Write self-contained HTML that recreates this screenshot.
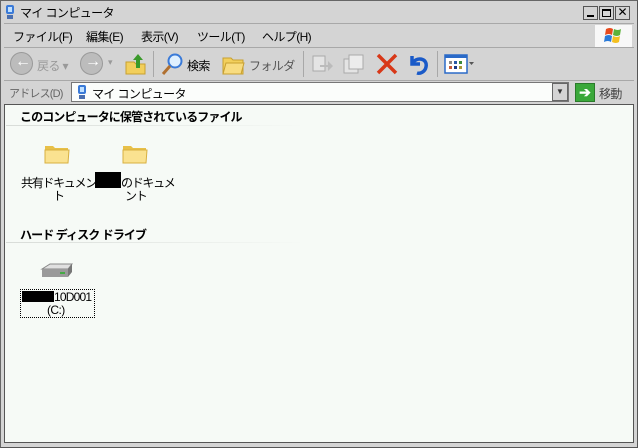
<!DOCTYPE html>
<html><head><meta charset="utf-8"><style>
*{margin:0;padding:0;box-sizing:border-box}
body{width:638px;height:448px;background:#d4d4d4;font-family:"Liberation Sans","Noto Sans CJK JP",sans-serif;font-size:12px;color:#000;position:relative;overflow:hidden;letter-spacing:-0.6px}
.a{position:absolute}
.win{left:0;top:0;width:638px;height:448px;border:1px solid #666;border-right-color:#555;border-bottom-color:#555}
.t{white-space:nowrap}
.hline{height:1px;background:#a8a8a8}
.btn{width:15px;height:14px;border:1px solid #555;background:#d4d4d4;letter-spacing:0}
</style></head><body>
<div class="a win"></div>
<svg class="a" style="left:4px;top:4px" width="12" height="16"><rect x="2" y="1" width="8" height="9" rx="2" fill="#3a7ad8"/><rect x="4" y="3" width="4" height="5" fill="#bfe0ff"/><rect x="3" y="11" width="6" height="4" fill="#4a6fb0"/></svg>
<div class="a t" style="left:20px;top:4px">マイ コンピュータ</div>
<div class="a btn" style="left:583px;top:6px"><div class="a" style="left:3px;top:8px;width:7px;height:2px;background:#000"></div></div>
<div class="a btn" style="left:599px;top:6px"><div class="a" style="left:2px;top:2px;width:9px;height:8px;border:1px solid #000;border-top-width:2px"></div></div>
<div class="a btn" style="left:615px;top:6px;font-size:12px;line-height:11px;text-align:center">✕</div>
<div class="a hline" style="left:4px;top:23px;width:630px"></div>
<div class="a t" style="left:13px;top:28px">ファイル(F)</div>
<div class="a t" style="left:86px;top:28px">編集(E)</div>
<div class="a t" style="left:141px;top:28px">表示(V)</div>
<div class="a t" style="left:197px;top:28px">ツール(T)</div>
<div class="a t" style="left:262px;top:28px">ヘルプ(H)</div>
<div class="a" style="left:595px;top:25px;width:37px;height:22px;background:#f8f8f8"></div>
<svg class="a" style="left:603px;top:27px" width="20" height="18"><path d="M3 2 q4-2 7 0 l-1 6 q-3-2-7 0z" fill="#e84a1c"/><path d="M11 2 q4 2 7 0 l-1 6 q-3 2-7 0z" fill="#5cb23a"/><path d="M2 9 q4-2 7 0 l-1 6 q-3-2-7 0z" fill="#2a7ad8"/><path d="M10 9 q4 2 7 0 l-1 6 q-3 2-7 0z" fill="#f4c020"/></svg>
<div class="a hline" style="left:4px;top:47px;width:630px"></div>
<div class="a" style="left:10px;top:52px;width:23px;height:23px;border-radius:50%;background:#bcbcbc;border:1px solid #999"></div>
<div class="a t" style="left:15px;top:53px;color:#fff;font-size:16px;font-weight:bold">←</div>
<div class="a t" style="left:37px;top:57px;color:#999">戻る ▾</div>
<div class="a" style="left:80px;top:52px;width:23px;height:23px;border-radius:50%;background:#bcbcbc;border:1px solid #999"></div>
<div class="a t" style="left:85px;top:53px;color:#fff;font-size:16px;font-weight:bold">→</div>
<div class="a t" style="left:108px;top:57px;color:#999;font-size:9px">▾</div>
<svg class="a" style="left:124px;top:52px" width="24" height="24"><path d="M2 10h8l2 2h9v10H2z" fill="#f2cf5c" stroke="#c8a030"/><path d="M12 16v-8h-3l5-6 5 6h-3v8z" fill="#3a9a2a"/></svg>
<div class="a" style="left:153px;top:51px;width:1px;height:26px;background:#a8a8a8"></div>
<svg class="a" style="left:160px;top:52px" width="24" height="24"><circle cx="15" cy="9" r="6.5" fill="#dff0ff" stroke="#3a7ad8" stroke-width="2"/><path d="M10 14l-7 8" stroke="#b07030" stroke-width="3"/></svg>
<div class="a t" style="left:187px;top:57px">検索</div>
<svg class="a" style="left:222px;top:54px" width="24" height="22"><path d="M1 4h8l2 2h10v14H1z" fill="#f2cf5c" stroke="#c8a030"/><path d="M4 9h18l-3 11H1z" fill="#f8dc80" stroke="#c8a030"/></svg>
<div class="a t" style="left:249px;top:57px;color:#555">フォルダ</div>
<div class="a" style="left:303px;top:51px;width:1px;height:26px;background:#a8a8a8"></div>
<svg class="a" style="left:310px;top:53px" width="24" height="22"><rect x="3" y="3" width="12" height="15" fill="#e4e4e4" stroke="#aaa"/><path d="M10 12h8v-4l5 5-5 5v-4h-8z" fill="#bbb"/></svg>
<svg class="a" style="left:342px;top:53px" width="24" height="22"><rect x="2" y="6" width="14" height="14" fill="#e4e4e4" stroke="#aaa"/><rect x="7" y="2" width="14" height="14" fill="#ececec" stroke="#aaa"/></svg>
<svg class="a" style="left:375px;top:52px" width="24" height="24"><path d="M3 3L21 21M21 3L3 21" stroke="#d83818" stroke-width="3.5"/></svg>
<svg class="a" style="left:406px;top:52px" width="24" height="24"><path d="M6 4v8h8" fill="none" stroke="#1a5ac8" stroke-width="3.5"/><path d="M6 12c4-8 16-6 14 3-1 5-6 7-9 6" fill="none" stroke="#1a5ac8" stroke-width="3.5"/></svg>
<div class="a" style="left:437px;top:51px;width:1px;height:26px;background:#a8a8a8"></div>
<svg class="a" style="left:444px;top:53px" width="32" height="22"><rect x="1" y="2" width="22" height="18" fill="#fff" stroke="#2a6ac8" stroke-width="1.5"/><rect x="1" y="2" width="22" height="3" fill="#2a6ac8"/><rect x="5" y="8" width="3" height="3" fill="#888"/><rect x="10" y="8" width="3" height="3" fill="#2a5aa8"/><rect x="15" y="8" width="3" height="3" fill="#3a8a3a"/><rect x="5" y="13" width="3" height="3" fill="#c85a3a"/><rect x="10" y="13" width="3" height="3" fill="#1a3a88"/><rect x="15" y="13" width="3" height="3" fill="#a8983a"/><path d="M25 9h5l-2.5 3z" fill="#555"/></svg>
<div class="a hline" style="left:4px;top:80px;width:630px"></div>
<div class="a t" style="left:9px;top:85px;color:#666;font-size:11px;letter-spacing:-0.8px">アドレス(D)</div>
<div class="a" style="left:71px;top:82px;width:498px;height:20px;background:#fbfdfb;border:1px solid #777"></div>
<svg class="a" style="left:76px;top:84px" width="12" height="16"><rect x="2" y="1" width="8" height="9" rx="2" fill="#3a7ad8"/><rect x="4" y="3" width="4" height="5" fill="#bfe0ff"/><rect x="3" y="11" width="6" height="4" fill="#4a6fb0"/></svg>
<div class="a t" style="left:92px;top:85px">マイ コンピュータ</div>
<div class="a" style="left:552px;top:83px;width:16px;height:18px;background:#d4d4d4;border:1px solid #666;font-size:8px;text-align:center;line-height:16px;color:#333;letter-spacing:0">▼</div>
<div class="a" style="left:575px;top:83px;width:20px;height:19px;background:#3aa83a;border:1px solid #2a7a2a;color:#fff;font-weight:bold;text-align:center;line-height:17px;font-size:14px;letter-spacing:0">➔</div>
<div class="a t" style="left:599px;top:85px;color:#444">移動</div>
<div class="a" style="left:4px;top:104px;width:630px;height:339px;background:#f6faf6;border:1px solid #555"></div>
<div class="a t" style="left:20px;top:108px;font-weight:bold;letter-spacing:-0.9px">このコンピュータに保管されているファイル</div>
<div class="a" style="left:6px;top:125px;width:300px;height:1px;background:linear-gradient(90deg,#d8dcd8,#f6faf6)"></div>
<svg class="a" style="left:44px;top:143px" width="26" height="22"><path d="M1 3h8l2 2h13v15H1z" fill="#e8c048"/><path d="M1 7h24l-1 13H1z" fill="#fae290" stroke="#d8b040" stroke-width="1"/></svg>
<svg class="a" style="left:122px;top:143px" width="26" height="22"><path d="M1 3h8l2 2h13v15H1z" fill="#e8c048"/><path d="M1 7h24l-1 13H1z" fill="#fae290" stroke="#d8b040" stroke-width="1"/></svg>
<div class="a t" style="left:21px;top:174px;letter-spacing:-1.3px">共有ドキュメン</div>
<div class="a t" style="left:53px;top:187px">ト</div>
<div class="a" style="left:95px;top:172px;width:26px;height:16px;background:#000"></div>
<div class="a t" style="left:121px;top:174px;letter-spacing:-1.3px">のドキュメ</div>
<div class="a t" style="left:125px;top:187px;letter-spacing:-1.3px">ント</div>
<div class="a t" style="left:20px;top:226px;font-weight:bold;letter-spacing:-0.9px">ハード ディスク ドライブ</div>
<div class="a" style="left:6px;top:242px;width:300px;height:1px;background:linear-gradient(90deg,#d8dcd8,#f6faf6)"></div>
<svg class="a" style="left:40px;top:262px" width="34" height="18"><path d="M2 7l8-5h22l-4 5z" fill="#e0e0e0" stroke="#888"/><path d="M2 7h26v8H2z" fill="#9a9a9a"/><path d="M28 7l4-5v8l-4 5z" fill="#777"/><rect x="20" y="10" width="5" height="2" fill="#4a4"/></svg>
<div class="a" style="left:20px;top:289px;width:75px;height:29px;border:1px dotted #000"></div>
<div class="a" style="left:22px;top:291px;width:32px;height:11px;background:#000"></div>
<div class="a t" style="left:54px;top:290px;letter-spacing:-0.8px">10D001</div>
<div class="a t" style="left:47px;top:303px">(C:)</div>
</body></html>
